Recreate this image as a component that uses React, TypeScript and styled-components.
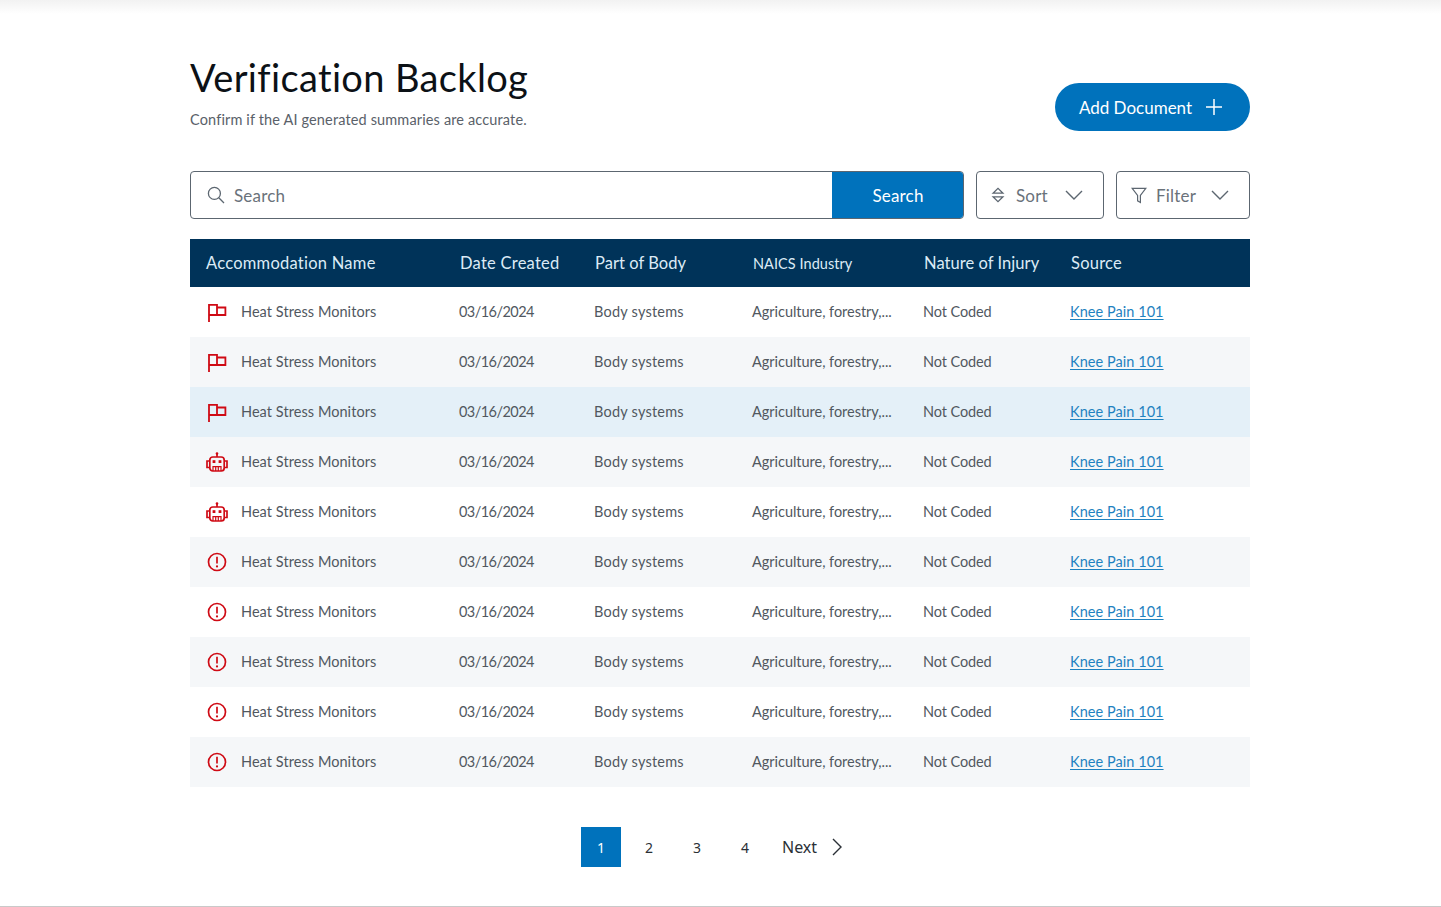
import React from "react";
import styled, { createGlobalStyle } from "styled-components";

const FONT = `"Lato", "Noto Sans", sans-serif`;
const RED = "#cf0a14";

const Global = createGlobalStyle`
  html, body { margin: 0; padding: 0; background: #fff; }
  body { font-family: ${FONT}; overflow: hidden; }
  * { box-sizing: border-box; }
`;

const Page = styled.div`
  width: 1441px;
  height: 907px;
  display: flex;
  flex-direction: column;
  align-items: center;
  border-bottom: 1px solid #c9c9c9;
`;
const TopShade = styled.div`
  width: 100%;
  height: 14px;
  flex: none;
  background: linear-gradient(#f2f2f2, #ffffff);
`;
const Content = styled.main`
  width: 1060px;
  margin-left: -1px;
  display: flex;
  flex-direction: column;
`;
const Head = styled.header`
  display: flex;
  justify-content: space-between;
  align-items: flex-start;
  height: 157px;
  padding-top: 40px;
`;
const Title = styled.h1`
  margin: 0;
  font-size: 38px;
  line-height: 46px;
  font-weight: 400;
  color: #0c1116;
  letter-spacing: 0.35px;
`;
const Sub = styled.p`
  margin: 9px 0 0;
  font-size: 14.5px;
  line-height: 21px;
  color: #5a6169;
  letter-spacing: 0.14px;
`;
const AddButton = styled.button`
  margin-top: 29px;
  width: 195px;
  height: 48px;
  border: none;
  border-radius: 24px;
  background: #0072bc;
  color: #fff;
  font: 400 17px ${FONT};
  letter-spacing: 0;
  display: flex;
  align-items: center;
  justify-content: center;
  gap: 13px;
  padding: 0 3px 0 0;
`;
const Toolbar = styled.div`
  display: flex;
  height: 48px;
  gap: 12px;
`;
const SearchBox = styled.div`
  flex: none;
  width: 774px;
  display: flex;
  border: 1px solid #5c6670;
  border-radius: 4px;
  overflow: hidden;
`;
const SearchField = styled.div`
  flex: 1;
  display: flex;
  align-items: center;
  gap: 9px;
  padding-left: 16px;
  color: #6a727a;
  font-size: 17px;
  letter-spacing: 0.2px;
`;
const SearchButton = styled.button`
  width: 132px;
  border: none;
  margin: -1px -1px -1px 0;
  background: #0072bc;
  color: #fff;
  font: 400 17px ${FONT};
  letter-spacing: 0.2px;
`;
const DropButton = styled.button<{ $w: number; $gap: number }>`
  flex: none;
  width: ${(p) => p.$w}px;
  border: 1px solid #5c6670;
  border-radius: 4px;
  background: #fff;
  color: #6a727a;
  font: 400 17px ${FONT};
  letter-spacing: 0.2px;
  display: flex;
  align-items: center;
  padding: 0 0 0 14px;
  gap: ${(p) => p.$gap}px;
`;
const Chevron = styled.svg`
  margin-left: auto;
  margin-right: 20px;
`;
const Table = styled.section`
  margin-top: 20px;
  display: flex;
  flex-direction: column;
`;
const HeaderRow = styled.div`
  display: grid;
  grid-template-columns: 254px 135px 158px 171px 147px 1fr;
  height: 48px;
  align-items: center;
  padding: 0 0 0 16px;
  background: #003359;
  color: #dcebf6;
`;
const HeaderCell = styled.div<{ $small?: boolean; $tight?: boolean }>`
  font-size: ${(p) => (p.$small ? "14.5px" : "16.5px")};
  letter-spacing: ${(p) => (p.$tight ? "0.05px" : "0.25px")};
`;
const Row = styled.div<{ $bg: string }>`
  display: grid;
  grid-template-columns: 253px 135px 158px 171px 147px 1fr;
  height: 50px;
  align-items: center;
  padding: 0 0 1px 16px;
  background: ${(p) => p.$bg};
  color: #51585f;
  font-size: 14.5px;
`;
const Cell = styled.div<{ $spacing: number }>`
  letter-spacing: ${(p) => p.$spacing}px;
  white-space: nowrap;
`;
const NameCell = styled.div`
  display: flex;
  align-items: center;
  gap: 13px;
  letter-spacing: 0.06px;
`;
const IconSlot = styled.span`
  width: 22px;
  height: 22px;
  display: flex;
  align-items: center;
  justify-content: center;
`;
const SourceLink = styled.a`
  color: #1f82c0;
  text-decoration: underline;
  text-underline-offset: 2px;
  letter-spacing: 0.05px;
`;
const Pager = styled.nav`
  margin-top: 40px;
  display: flex;
  align-items: center;
  padding-left: 391px;
  height: 40px;
  color: #2a3036;
`;
const PageNum = styled.span<{ $active?: boolean }>`
  width: 40px;
  height: 40px;
  margin-right: 8px;
  display: flex;
  align-items: center;
  justify-content: center;
  font-family: "Noto Sans", sans-serif;
  font-size: 14px;
  background: ${(p) => (p.$active ? "#0072bc" : "transparent")};
  color: ${(p) => (p.$active ? "#fff" : "#2a3036")};
`;
const NextLink = styled.span`
  margin-left: 9px;
  display: flex;
  align-items: center;
  gap: 14px;
  font-family: "Noto Sans", sans-serif;
  font-size: 16px;
`;

const FlagIcon = () => (
  <svg width="20" height="20" viewBox="0 0 20 20" fill="none" stroke={RED} strokeWidth="1.8">
    <path d="M2 20V2.8H10V13H2" />
    <path d="M10 5.5H18.4V13H10" />
  </svg>
);

const RobotIcon = () => (
  <svg width="22" height="20" viewBox="0 0 22 20" fill="none" stroke={RED} strokeWidth="1.7">
    <path d="M11 1.5V5" />
    <circle cx="11" cy="1.6" r="1.3" fill={RED} stroke="none" />
    <rect x="3.8" y="5" width="14.4" height="14" rx="3" />
    <path d="M3.8 9H1v6.5h2.8M18.2 9H21v6.5h-2.8" />
    <rect x="6.6" y="8.2" width="2.8" height="2.8" fill={RED} stroke="none" />
    <rect x="12.6" y="8.2" width="2.8" height="2.8" fill={RED} stroke="none" />
    <path d="M7 19v-4.4h8V19M9.7 14.6V19M12.3 14.6V19" strokeWidth="1.2" />
  </svg>
);

const AlertIcon = () => (
  <svg width="20" height="20" viewBox="0 0 20 20" fill="none" stroke={RED} strokeWidth="1.7">
    <circle cx="10" cy="10" r="8.5" />
    <path d="M10 4.8V11.4" />
    <circle cx="10" cy="14.4" r="1.1" fill={RED} stroke="none" />
  </svg>
);

const ChevronDown = () => (
  <Chevron width="18" height="10" viewBox="0 0 18 10" fill="none" stroke="#5c6670" strokeWidth="1.4">
    <path d="M1 1l8 8 8-8" />
  </Chevron>
);

type Kind = "flag" | "robot" | "alert";
const rows: { kind: Kind; bg: string }[] = [
  { kind: "flag", bg: "#ffffff" },
  { kind: "flag", bg: "#f5f7f9" },
  { kind: "flag", bg: "#e4f0f8" },
  { kind: "robot", bg: "#f5f7f9" },
  { kind: "robot", bg: "#ffffff" },
  { kind: "alert", bg: "#f5f7f9" },
  { kind: "alert", bg: "#ffffff" },
  { kind: "alert", bg: "#f5f7f9" },
  { kind: "alert", bg: "#ffffff" },
  { kind: "alert", bg: "#f5f7f9" },
];

const icons: Record<Kind, React.ReactNode> = {
  flag: <FlagIcon />,
  robot: <RobotIcon />,
  alert: <AlertIcon />,
};

export default function App() {
  return (
    <>
      <Global />
      <Page>
        <TopShade />
        <Content>
          <Head>
            <div>
              <Title>Verification Backlog</Title>
              <Sub>Confirm if the AI generated summaries are accurate.</Sub>
            </div>
            <AddButton>
              Add Document
              <svg width="18" height="18" viewBox="0 0 18 18" fill="none" stroke="#fff" strokeWidth="1.5">
                <path d="M9 1v16M1 9h16" />
              </svg>
            </AddButton>
          </Head>
          <Toolbar>
            <SearchBox>
              <SearchField>
                <svg width="18" height="18" viewBox="0 0 18 18" fill="none" stroke="#5c6670" strokeWidth="1.3">
                  <circle cx="7.4" cy="7.4" r="6" />
                  <path d="M11.8 11.8L17 17" />
                </svg>
                Search
              </SearchField>
              <SearchButton>Search</SearchButton>
            </SearchBox>
            <DropButton $w={128} $gap={11}>
              <svg width="14" height="16" viewBox="0 0 14 16" fill="none" stroke="#5c6670" strokeWidth="1.2">
                <path d="M2 6.2L7 1.4l5 4.8zM2 9.8l5 4.8 5-4.8z" />
              </svg>
              Sort
              <ChevronDown />
            </DropButton>
            <DropButton $w={134} $gap={9}>
              <svg width="16" height="17" viewBox="0 0 16 17" fill="none" stroke="#5c6670" strokeWidth="1.2">
                <path d="M1.2 1.4h13.6L9.4 8.4v7l-2.8-1.6V8.4z" />
              </svg>
              Filter
              <ChevronDown />
            </DropButton>
          </Toolbar>
          <Table>
            <HeaderRow>
              <HeaderCell>Accommodation Name</HeaderCell>
              <HeaderCell>Date Created</HeaderCell>
              <HeaderCell $tight>Part of Body</HeaderCell>
              <HeaderCell $small $tight>NAICS Industry</HeaderCell>
              <HeaderCell $tight>Nature of Injury</HeaderCell>
              <HeaderCell>Source</HeaderCell>
            </HeaderRow>
            {rows.map((r, i) => (
              <Row key={i} $bg={r.bg}>
                <NameCell>
                  <IconSlot>{icons[r.kind]}</IconSlot>
                  Heat Stress Monitors
                </NameCell>
                <Cell $spacing={-0.55}>03/16/2024</Cell>
                <Cell $spacing={0.22}>Body systems</Cell>
                <Cell $spacing={-0.03}>Agriculture, forestry,...</Cell>
                <Cell $spacing={-0.1}>Not Coded</Cell>
                <Cell $spacing={0}>
                  <SourceLink href="#">Knee Pain 101</SourceLink>
                </Cell>
              </Row>
            ))}
          </Table>
          <Pager>
            <PageNum $active>1</PageNum>
            <PageNum>2</PageNum>
            <PageNum>3</PageNum>
            <PageNum>4</PageNum>
            <NextLink>
              Next
              <svg width="12" height="18" viewBox="0 0 12 18" fill="none" stroke="#2a3036" strokeWidth="1.4">
                <path d="M2 1l8 8-8 8" />
              </svg>
            </NextLink>
          </Pager>
        </Content>
      </Page>
    </>
  );
}
